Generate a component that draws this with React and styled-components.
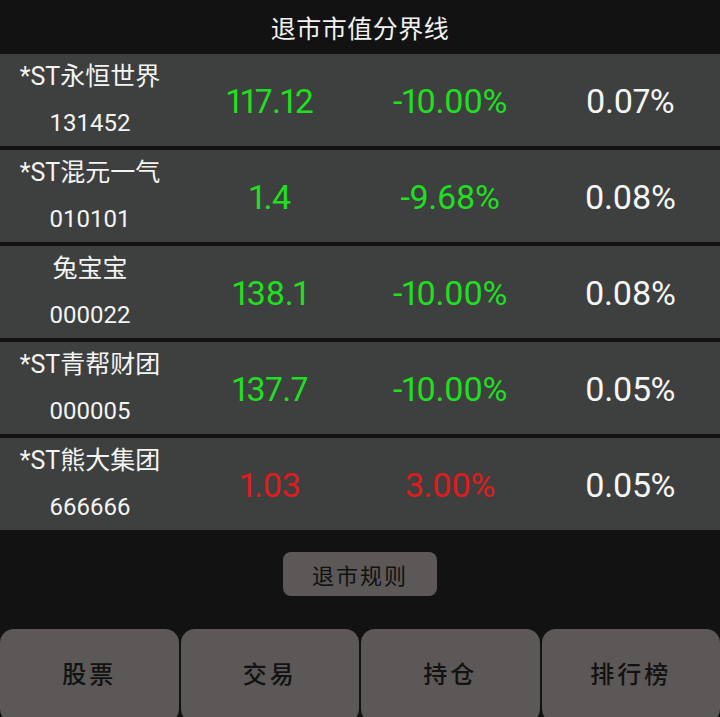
import React from "react";
import styled, { createGlobalStyle } from "styled-components";

const Global = createGlobalStyle`
  html, body { margin: 0; padding: 0; background: #121212; overflow: hidden; }
  body { font-family: Roboto, "Noto Sans CJK SC", sans-serif; }
`;

const Page = styled.div`
  width: 720px;
  height: 717px;
  background: #121212;
  display: flex;
  flex-direction: column;
  overflow: hidden;
`;

const Header = styled.div`
  height: 54px;
  flex: none;
  display: flex;
  align-items: center;
  justify-content: center;
  color: #f2f2f2;
  font-family: "Noto Sans CJK SC", sans-serif;
  font-size: 25px;
  letter-spacing: 0.5px;
`;

const Table = styled.div`
  display: flex;
  flex-direction: column;
  gap: 4px;
  flex: none;
`;

const Row = styled.div`
  height: 92px;
  background: #3d403e;
  display: grid;
  grid-template-columns: repeat(4, 1fr);
  align-items: center;
`;

const NameCell = styled.div`
  display: flex;
  flex-direction: column;
  align-items: center;
  color: #f4f4f4;
  font-size: 25px;
  line-height: 46px;
  font-family: Roboto, "Noto Sans CJK SC", sans-serif;
`;

const Code = styled.span`
  font-size: 24px;
`;

const Num = styled.div`
  text-align: center;
  font-family: Roboto, sans-serif;
  font-weight: 400;
  font-size: 34px;
  font-variant-numeric: proportional-nums;
  letter-spacing: -0.5px;
  padding-top: 1px;
  color: ${(p) => p.$color};
`;

const Middle = styled.div`
  height: 99px;
  flex: none;
  display: flex;
  align-items: flex-start;
  justify-content: center;
  padding-top: 22px;
  box-sizing: border-box;
`;

const RuleButton = styled.button`
  width: 154px;
  height: 44px;
  border: none;
  border-radius: 8px;
  background: #5b5857;
  color: #111111;
  font-family: "Noto Sans CJK SC", sans-serif;
  font-size: 22px;
  letter-spacing: 2px;
  padding: 0;
`;

const Tabs = styled.div`
  display: grid;
  grid-template-columns: repeat(4, 1fr);
  gap: 2px;
  flex: none;
`;

const Tab = styled.div`
  height: 94px;
  background: #5b5857;
  border-radius: 14px;
  display: flex;
  align-items: center;
  justify-content: center;
  padding-bottom: 8px;
  box-sizing: border-box;
  color: #121212;
  font-family: "Noto Sans CJK SC", sans-serif;
  font-size: 24px;
  font-weight: 500;
  letter-spacing: 3px;
`;

const GREEN = "#22de22";
const RED = "#e01b1f";
const WHITE = "#f6f6f6";

const rows = [
  { name: "*ST永恒世界", code: "131452", price: "117.12", chg: "-10.00%", ratio: "0.07%", up: false },
  { name: "*ST混元一气", code: "010101", price: "1.4", chg: "-9.68%", ratio: "0.08%", up: false },
  { name: "兔宝宝", code: "000022", price: "138.1", chg: "-10.00%", ratio: "0.08%", up: false },
  { name: "*ST青帮财团", code: "000005", price: "137.7", chg: "-10.00%", ratio: "0.05%", up: false },
  { name: "*ST熊大集团", code: "666666", price: "1.03", chg: "3.00%", ratio: "0.05%", up: true },
];

export default function App() {
  return (
    <Page>
      <Global />
      <Header>退市市值分界线</Header>
      <Table>
        {rows.map((r) => (
          <Row key={r.code}>
            <NameCell>
              <span>{r.name}</span>
              <Code>{r.code}</Code>
            </NameCell>
            <Num $color={r.up ? RED : GREEN}>{r.price}</Num>
            <Num $color={r.up ? RED : GREEN}>{r.chg}</Num>
            <Num $color={WHITE}>{r.ratio}</Num>
          </Row>
        ))}
      </Table>
      <Middle>
        <RuleButton>退市规则</RuleButton>
      </Middle>
      <Tabs>
        <Tab>股票</Tab>
        <Tab>交易</Tab>
        <Tab>持仓</Tab>
        <Tab>排行榜</Tab>
      </Tabs>
    </Page>
  );
}
